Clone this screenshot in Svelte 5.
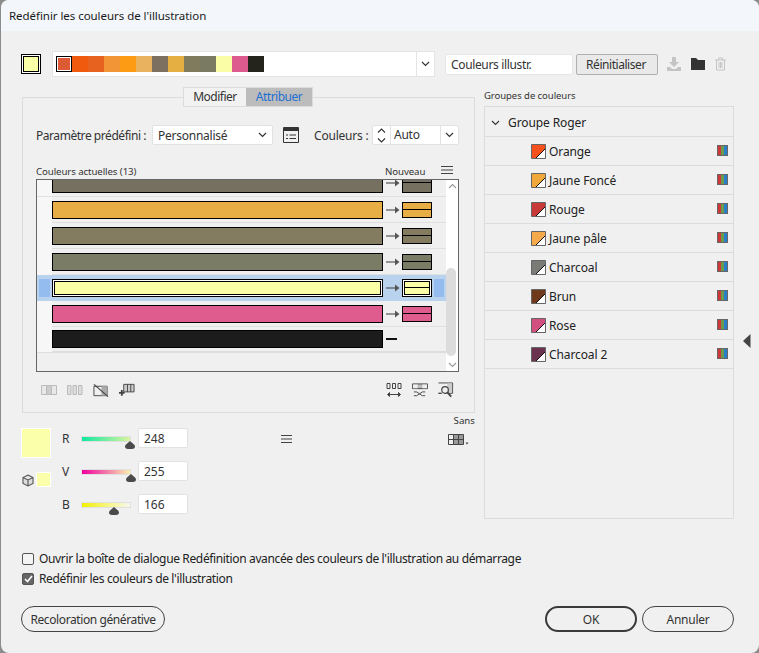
<script>
  const palette = ['#dc5a36','#ef5a0e','#e8621f','#f29537','#fd9c14','#e8b25f','#7d7060','#e5af42','#7f7b5c','#7a7a62','#fafca6','#dc5a8e','#25241c'];
  const rows = [
    { c: '#75705f', clip: true },
    { c: '#e6ae44' },
    { c: '#837c60' },
    { c: '#7b7c66' },
    { c: '#fbffa6', sel: true },
    { c: '#df5c8e' },
    { c: '#1c1c1c', black: true }
  ];
  const groups = [
    ['Orange', '#f6511c'], ['Jaune Foncé', '#f0a83a'], ['Rouge', '#c83a37'], ['Jaune pâle', '#f4a94a'],
    ['Charcoal', '#7a7b76'], ['Brun', '#6f3a1c'], ['Rose', '#d25080'], ['Charcoal 2', '#6c3350']
  ];
  const sliders = [
    { l: 'R', v: '248', g: 'linear-gradient(90deg,#10e8a0,#d8f5a0)', p: 49 },
    { l: 'V', v: '255', g: 'linear-gradient(90deg,#f000a0,#f8f0b0)', p: 50 },
    { l: 'B', v: '166', g: 'linear-gradient(90deg,#f4f000,#f8f8f0)', p: 33 }
  ];
</script>

<div class="dialog">
  <div class="title">Redéfinir les couleurs de l'illustration</div>
  <div class="content">
    <div class="top">
      <div class="cur"><span></span></div>
      <div class="palette">
        <div class="chips">
          {#each palette as c, i}
            <span class="chip" class:first={i === 0} style="background:{c}"></span>
          {/each}
        </div>
        <div class="pal-arrow"><svg width="9" height="6" viewBox="0 0 9 6"><path d="M1 1l3.500 3.500L8 1" fill="none" stroke="#333" stroke-width="1.200"/></svg></div>
      </div>
      <div class="name">Couleurs illustr.</div>
      <div class="reset">Réinitialiser</div>
      <div class="tools">
        <svg width="16" height="16" viewBox="0 0 16 16"><path d="M6 1h4v5h3l-5 5-5-5h3zM1 11h3l2 2h4l2-2h3v4H1z" fill="#c4c4c4"/></svg>
        <svg width="16" height="14" viewBox="0 0 16 14"><path d="M1 1h5l2 2h7v10H1z" fill="#333"/></svg>
        <svg width="13" height="14" viewBox="0 0 13 14"><path d="M1 3h11M4.500 3V1h4v2M2.500 3v10h8V3M5 5v6M6.500 5v6M8 5v6" fill="none" stroke="#c4c4c4"/></svg>
      </div>
    </div>

    <div class="main">
      <div class="left">
        <div class="tabs"><span class="tab">Modifier</span><span class="tab on">Attribuer</span></div>
        <div class="panel">
          <div class="preset">
            <span class="lbl">Paramètre prédéfini :</span>
            <div class="select">Personnalisé<svg width="9" height="6" viewBox="0 0 9 6"><path d="M1 1l3.500 3.500L8 1" fill="none" stroke="#333" stroke-width="1.200"/></svg></div>
            <svg class="listicon" width="16" height="16" viewBox="0 0 16 16"><path d="M.5 .5h15v15H.5z" fill="none" stroke="#333"/><path d="M1 1h14v3H1z" fill="#333"/><path d="M3 8h2M3 11.500h2M6.500 8H13M6.500 11.500H13" stroke="#333"/></svg>
            <span class="lbl cl">Couleurs :</span>
            <div class="stepper">
              <div class="updown"><svg width="9" height="15" viewBox="0 0 9 15"><path d="M1 4.500L4.500 1 8 4.500M1 10.500L4.500 14 8 10.500" fill="none" stroke="#333" stroke-width="1.100"/></svg></div>
              <div class="auto">Auto</div>
              <div class="auto-arrow"><svg width="9" height="6" viewBox="0 0 9 6"><path d="M1 1l3.500 3.500L8 1" fill="none" stroke="#333" stroke-width="1.200"/></svg></div>
            </div>
          </div>

          <div class="heads">
            <span>Couleurs actuelles (13)</span>
            <span class="now">Nouveau</span>
            <svg class="menu" width="12" height="8" viewBox="0 0 12 8"><path d="M0 .5h12M0 4h12M0 7.500h12" stroke="#444"/></svg>
          </div>

          <div class="list">
            <div class="rows">
              {#each rows as r}
                <div class="row" class:clip={r.clip} class:sel={r.sel}>
                  <div class="gutter"><span></span></div>
                  <div class="bar" style="background:{r.c}"></div>
                  {#if r.black}
                    <div class="dash"></div>
                  {:else}
                    <svg class="arrow" width="14" height="10" viewBox="0 0 14 10"><path d="M0 5h9" stroke="#555" stroke-width="1.200"/><path d="M9 1.500L13.500 5 9 8.500z" fill="#555"/></svg>
                    <div class="newbar" style="background:{r.c}"><i></i></div>
                    <div class="rmark"></div>
                  {/if}
                </div>
              {/each}
            </div>
            <div class="scroll">
              <svg width="9" height="6" viewBox="0 0 9 6"><path d="M1 5l3.500-3.500L8 5" fill="none" stroke="#999" stroke-width="1.100"/></svg>
              <div class="track"><div class="thumb"></div></div>
              <svg width="9" height="6" viewBox="0 0 9 6"><path d="M1 1l3.500 3.500L8 1" fill="none" stroke="#999" stroke-width="1.100"/></svg>
            </div>
          </div>

          <div class="actions">
            <div class="act-left">
              <svg width="16" height="10" viewBox="0 0 16 10"><path d="M.5 .5h15v9H.5z" fill="#e8e8e8" stroke="#bbb"/><path d="M5.500 .5v9h5v-9z" fill="#ccc" stroke="#bbb"/></svg>
              <svg width="16" height="10" viewBox="0 0 16 10"><path d="M.5 .5h3.500v9H.5zM6 .5h3.500v9H6zM11.500 .5H15v9h-3.500z" fill="#ddd" stroke="#bbb"/></svg>
              <svg width="16" height="15" viewBox="0 0 17 15"><path d="M1 3h14v10H1z" fill="none" stroke="#444"/><path d="M9 3h6v10H9z" fill="#aaa"/><path d="M1 1l15 13" stroke="#444" stroke-width="1.300"/></svg>
              <svg width="16" height="14" viewBox="0 0 17 14"><path d="M5 1h11v8H5z" fill="#ccc" stroke="#444"/><path d="M9 1v8M12.500 1v8" stroke="#444"/><path d="M3 7v6M0 10h6" stroke="#444" stroke-width="2"/></svg>
            </div>
            <div class="act-right">
              <svg width="16" height="15" viewBox="0 0 15 15"><path d="M.5 .5h3v5h-3zM6 .5h3v5H6zM11.500 .5h3v5h-3z" fill="none" stroke="#444"/><path d="M3 11.500h9M3 9.500L1 11.500l2 2zM12 9.500l2 2-2 2z" stroke="#444" fill="#444"/></svg>
              <svg width="16" height="15" viewBox="0 0 17 15"><path d="M.5 .5h16v5H.5z" fill="#bbb" stroke="#444"/><path d="M1 1h5v4H1zM11 1h5v4h-5z" fill="#eee"/><path d="M2 9h3l6 4h3M2 13h3l6-4h3" fill="none" stroke="#444"/></svg>
              <svg width="16" height="16" viewBox="0 0 17 16"><path d="M.5 .5h15v11H10M4 11.500H.5z" fill="none" stroke="#444"/><path d="M10 1h5v9h-5z" fill="#ccc"/><circle cx="7.500" cy="8" r="3.500" fill="#eee" stroke="#444" stroke-width="1.300"/><path d="M10 10.500l4 4.500" stroke="#444" stroke-width="2"/></svg>
            </div>
          </div>
        </div>

        <div class="color">
          <div class="sw-col">
            <div class="big"></div>
            <div class="small-row">
              <svg width="12" height="13" viewBox="0 0 12 13"><path d="M6 1l5 2.500v6L6 12 1 9.500v-6zM1 3.500L6 6l5-2.500M6 6v6" fill="#ddd" stroke="#555" stroke-width="1.100"/></svg>
              <div class="small"></div>
            </div>
          </div>
          <div class="sliders">
            {#each sliders as s}
              <div class="sl">
                <span class="ch">{s.l}</span>
                <div class="range">
                  <div class="ramp" style="background:{s.g}"></div>
                  <svg class="knob" style="left:{s.p - 5}px" width="10" height="8" viewBox="0 0 10 10" preserveAspectRatio="none"><path d="M5 0L9 4.500Q10 5.500 10 7 10 10 7 10H3Q0 10 0 7 0 5.500 1 4.500z" fill="#4a4a4a"/></svg>
                </div>
                <div class="val">{s.v}</div>
              </div>
            {/each}
          </div>
          <svg class="menu2" width="11" height="8" viewBox="0 0 11 8"><path d="M0 .5h11M0 4h11M0 7.500h11" stroke="#444"/></svg>
          <div class="sans">
            <span>Sans</span>
            <svg width="21" height="11" viewBox="0 0 21 11"><path d="M.5 .5h15v10H.5z" fill="none" stroke="#444"/><path d="M6 1h9v9H6z" fill="#999"/><path d="M.5 5.500h15M5.500 .5v10M10.500 .5v10" stroke="#444"/><path d="M17.500 8.500h3l-1.500 2z" fill="#444"/></svg>
          </div>
        </div>
      </div>

      <div class="right">
        <div class="rlabel">Groupes de couleurs</div>
        <div class="gbox">
          <div class="ghead">
            <svg width="9" height="6" viewBox="0 0 9 6"><path d="M1 1l3.500 3.500L8 1" fill="none" stroke="#333" stroke-width="1.100"/></svg>
            <span>Groupe Roger</span>
          </div>
          {#each groups as g}
            <div class="grow">
              <svg class="gsw" width="15" height="15" viewBox="0 0 15 15">
                <path d="M.5 .5h14v14H.5z" fill={g[1]} stroke="#666"/>
                <path d="M14 5V14H5z" fill="#fff"/>
                <path d="M14 5L5 14" stroke="#111"/>
              </svg>
              <span class="gname">{g[0]}</span>
              <div class="rgb"><i></i><i></i><i></i></div>
            </div>
          {/each}
        </div>
      </div>

      <div class="expander"><svg width="8" height="14" viewBox="0 0 8 14"><path d="M7.500 0v14L0 7z" fill="#444"/></svg></div>
    </div>

    <div class="checks">
      <label class="chk"><span class="box"></span>Ouvrir la boîte de dialogue Redéfinition avancée des couleurs de l'illustration au démarrage</label>
      <label class="chk"><span class="box on"><svg width="9" height="8" viewBox="0 0 9 8"><path d="M1 4l2.500 2.500L8 1" fill="none" stroke="#fff" stroke-width="1.600"/></svg></span>Redéfinir les couleurs de l'illustration</label>
    </div>

    <div class="foot">
      <div class="btn gen">Recoloration générative</div>
      <div class="btn ok">OK</div>
      <div class="btn cancel">Annuler</div>
    </div>
  </div>
</div>

<style>
  :global(body) { margin: 0; background: #8c8c8c; }
  .dialog {
    width: 758px; height: 653px; box-sizing: border-box; margin-left: 1px;
    background: #f0f0f0; border-radius: 8px; overflow: hidden;
    font-family: "Noto Sans", sans-serif; font-size: 12px; color: #333;
    letter-spacing: -0.25px;
  }
  .title { height: 31px; line-height: 31px; padding-left: 8px; background: #f3f6fb; color: #1a1a1a; font-size: 11.5px; letter-spacing: -0.05px; }
  .content { padding: 20px 25px 0 20px; }
  .top { display: flex; align-items: center; height: 26px; }
  .cur { width: 20px; height: 20px; box-sizing: border-box; border: 1px solid #000; background: #fff; padding: 2px; margin-right: 11px; }
  .cur span { display: block; width: 14px; height: 14px; background: #f8ffa6; outline: 1px solid #000; }
  .palette { width: 383px; height: 26px; box-sizing: border-box; background: #fff; border: 1px solid #e4e4e4; display: flex; justify-content: space-between; }
  .chips { display: flex; padding: 4px 0 0 3px; }
  .chip { width: 16px; height: 16px; }
  .chip.first { box-sizing: border-box; border: 1px solid #000; outline: 1px solid #fff; outline-offset: -2px; }
  .pal-arrow { width: 17px; border-left: 1px solid #e4e4e4; display: flex; align-items: center; justify-content: center; }
  .name { width: 128px; height: 21px; box-sizing: border-box; background: #fff; border: 1px solid #e6e6e6; padding-left: 5px; margin-left: 10px; color: #333; border-radius: 2px; letter-spacing: -0.35px; line-height: 19px; }
  .reset { width: 82px; height: 21px; line-height: 19px; box-sizing: border-box; border: 1px solid #b0b0b0; background: #e9e9e9; text-align: center; margin-left: 3px; border-radius: 2px; letter-spacing: -0.45px; padding-right: 2px; }
  .tools { display: flex; align-items: center; gap: 8px; margin-left: 8px; }

  .main { display: flex; position: relative; margin-top: 10px; height: 446px; }
  .left { width: 453px; margin-left: 1px; position: relative; padding-top: 10px; }
  .tabs { position: absolute; top: 0; left: 161px; display: flex; height: 20px; box-sizing: border-box; border: 1px solid #dcdcdc; background: #f0f0f0; z-index: 1; }
  .tab { line-height: 18px; color: #333; background: #f2f2f2; width: 62px; box-sizing: border-box; text-align: center; letter-spacing: -0.5px; }
  .tab.on { background: #bcbcbc; color: #1f6fd0; width: 66px; }
  .panel { height: 316px; box-sizing: border-box; border: 1px solid #dcdcdc; padding: 0 15px 0 13px; }
  .preset { display: flex; align-items: center; height: 20px; margin-top: 27px; }
  .lbl { width: 116px; flex: none; letter-spacing: -0.45px; white-space: nowrap; }
  .select { width: 121px; height: 20px; flex: none; box-sizing: border-box; background: #fff; border: 1px solid #e2e2e2; border-radius: 2px; padding: 0 5px 0 5px; display: flex; justify-content: space-between; align-items: center; }
  .listicon { margin-left: 10px; flex: none; }
  .lbl.cl { margin-left: 15px; width: 58px; letter-spacing: -0.2px; }
  .stepper { display: flex; width: 87px; flex: none; height: 20px; box-sizing: border-box; background: #fff; border: 1px solid #e2e2e2; border-radius: 2px; }
  .updown { width: 18px; box-sizing: border-box; border-right: 1px solid #e2e2e2; display: flex; align-items: center; justify-content: center; }
  .auto { width: 49px; padding-left: 3px; box-sizing: border-box; line-height: 18px; }
  .auto-arrow { width: 18px; box-sizing: border-box; border-left: 1px solid #e2e2e2; display: flex; align-items: center; justify-content: center; }
  .heads { display: flex; align-items: center; height: 14px; margin-top: 19px; font-size: 9.700px; letter-spacing: -0.1px; position: relative; }
  .now { position: absolute; left: 349px; }
  .menu { position: absolute; left: 405px; top: 2px; }

  .list { width: 423px; height: 193px; box-sizing: border-box; border: 1px solid #666; display: flex; overflow: hidden; margin-top: 1px; }
  .rows { width: 409px; flex: none; }
  .row { height: 26px; box-sizing: border-box; border-bottom: 1px solid #e0e0e0; display: flex; align-items: center; position: relative; }
  .row:last-child { border-bottom: 2px solid #dedede; }
  .row.clip { height: 17px; align-items: flex-end; padding-bottom: 3px; }
  .row.clip .bar { height: 13px; border-top: 0; }
  .row.clip .newbar { height: 13px; border-top: 0; }
  .row.clip .newbar i { top: 2px; }
  .row.clip .arrow { position: relative; top: -5px; }
  .row.sel { background: #b9d2ee; border-bottom-color: #b9d2ee; }
  .gutter { width: 15px; align-self: stretch; flex: none; background: #f7f7f7; margin-bottom: -1px; display: flex; align-items: center; justify-content: center; }
  .row.clip .gutter { margin-bottom: -3px; }
  .row.sel .gutter { background: #b9d2ee; }
  .row.sel .gutter span { width: 11px; height: 18px; background: #94bcef; }
  .bar { width: 331px; height: 18px; box-sizing: border-box; border: 1px solid #000; flex: none; }
  .row.sel .bar { outline: 1px solid #000; outline-offset: -3px; border-color: #000; box-shadow: inset 0 0 0 1px #fff; }
  .arrow { margin-left: 3px; flex: none; }
  .newbar { width: 30px; height: 16px; box-sizing: border-box; border: 1px solid #000; margin-left: 2px; position: relative; flex: none; }
  .newbar i { position: absolute; left: 0; right: 0; top: 6px; height: 1px; background: #000; }
  .row.sel .newbar { box-shadow: inset 0 0 0 1px #fff; outline: 1px solid #000; outline-offset: -3px; height: 18px; }
  .row.sel .newbar i { top: 7px; left: 2px; right: 2px; }
  .rmark { display: none; }
  .row.sel .rmark { display: block; width: 10px; height: 18px; background: #94bcef; margin-left: 2px; }
  .dash { width: 11px; height: 2px; background: #111; margin-left: 3px; }
  .scroll { width: 12px; flex: none; background: #fff; display: flex; flex-direction: column; align-items: center; padding: 3px 0; height: 100%; box-sizing: border-box; }
  .track { flex: 1; width: 100%; position: relative; }
  .thumb { position: absolute; top: 79px; bottom: 6px; left: 0; right: 2px; background: #dcdcdc; border-radius: 5px; }
  .actions { display: flex; justify-content: space-between; align-items: center; margin-top: 10px; padding: 0 5px; height: 16px; }
  .act-left { display: flex; align-items: center; gap: 10px; }
  .act-right { display: flex; align-items: center; gap: 10px; }

  .color { display: flex; position: relative; margin: 15px 0 0 -1px; }
  .sw-col { width: 30px; flex: none; }
  .big { width: 30px; height: 30px; box-sizing: border-box; background: #fbffa9; border: 1px solid #fff; }
  .small-row { display: flex; align-items: center; justify-content: space-between; margin-top: 14px; padding-left: 1px; }
  .small-row svg { position: relative; top: 1px; }
  .small { width: 15px; height: 15px; box-sizing: border-box; background: #fbffa9; border: 1px solid #fff; }
  .sliders { margin-left: 11px; display: flex; flex-direction: column; gap: 13px; }
  .sl { display: flex; align-items: center; height: 20px; }
  .ch { width: 19px; font-size: 12px; color: #333; padding-top: 1px; }
  .range { width: 50px; height: 20px; position: relative; }
  .ramp { position: absolute; top: 8px; left: 0; height: 4px; border: 1px solid #e0e0e0; width: 48px; }
  .knob { position: absolute; top: 13px; }
  .val { width: 50px; height: 20px; line-height: 19px; box-sizing: border-box; background: #fff; border: 1px solid #e2e2e2; border-radius: 2px; padding-left: 5px; margin-left: 7px; letter-spacing: 0; }
  .menu2 { position: absolute; left: 260px; top: 7px; }
  .sans { position: absolute; left: 427px; top: -14px; width: 27px; display: flex; flex-direction: column; align-items: flex-end; font-size: 9.700px; gap: 7px; letter-spacing: 0; }
  .sans svg { align-self: flex-start; }

  .right { width: 250px; margin-left: 9px; }
  .rlabel { font-size: 9.500px; height: 19px; line-height: 15px; padding-top: 1px; box-sizing: border-box; letter-spacing: -0.05px; }
  .gbox { height: 413px; box-sizing: border-box; border: 1px solid #dcdcdc; }
  .ghead { height: 30px; box-sizing: border-box; border-bottom: 1px solid #dcdcdc; display: flex; align-items: center; padding: 2px 0 0 6px; gap: 8px; }
  .ghead span { color: #222; letter-spacing: -0.1px; }
  .grow { height: 29px; box-sizing: border-box; border-bottom: 1px solid #dcdcdc; display: flex; align-items: center; padding-left: 46px; }
  .gname { margin-left: 3px; color: #222; letter-spacing: -0.1px; }
  .rgb { margin-left: auto; margin-right: 5px; width: 11px; height: 11px; box-sizing: border-box; border: 1px solid #666; display: flex; margin-top: -1px; }
  .rgb i { flex: 1; }
  .rgb i:nth-child(1) { background: #d03838; }
  .rgb i:nth-child(2) { background: #6a9a50; }
  .rgb i:nth-child(3) { background: #2a80c8; }
  .expander { position: absolute; left: 722px; top: 247px; }

  .checks { margin-top: 17px; padding-left: 1px; display: flex; flex-direction: column; gap: 3px; }
  .chk { display: flex; align-items: center; height: 17px; gap: 5px; color: #222; letter-spacing: -0.36px; }
  .box { width: 10px; height: 10px; border: 1px solid #555; border-radius: 2px; background: #f4f4f4; display: flex; align-items: center; justify-content: center; }
  .box.on { background: #666; }
  .foot { display: flex; margin-top: 19px; }
  .btn { height: 26px; box-sizing: border-box; border: 1px solid #444; border-radius: 13px; line-height: 25px; text-align: center; color: #333; }
  .gen { width: 144px; letter-spacing: -0.4px; }
  .ok { width: 92px; margin-left: auto; border: 2px solid #3a3a3a; line-height: 23px; }
  .cancel { width: 92px; margin-left: 5px; }
</style>
